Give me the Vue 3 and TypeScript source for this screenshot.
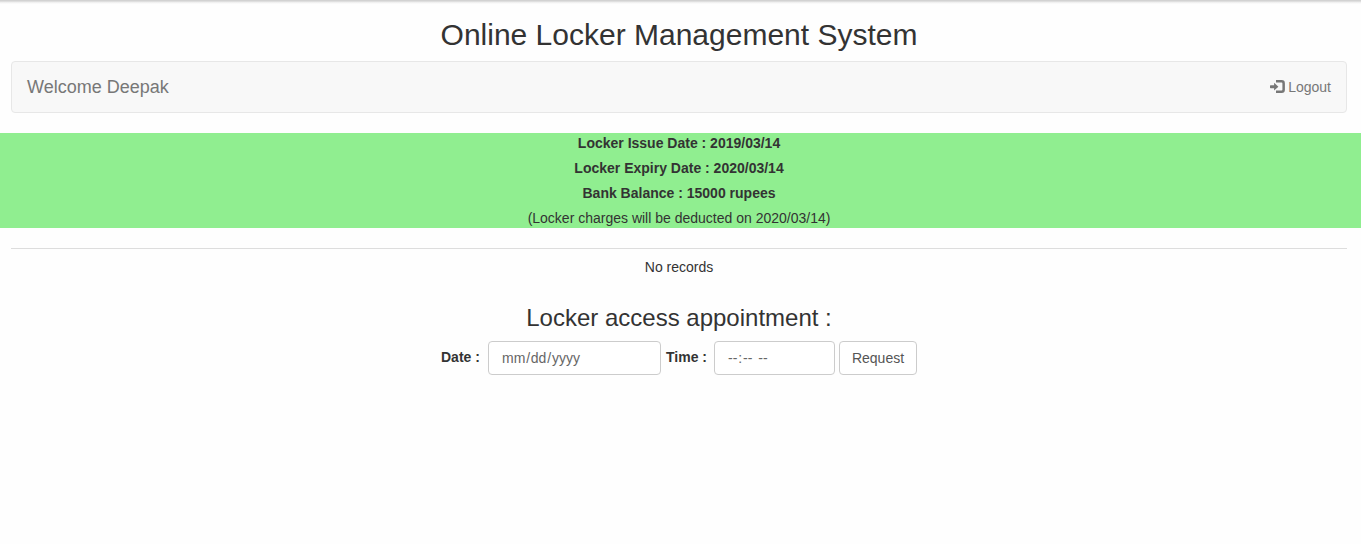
<script setup lang="ts">
import { ref } from 'vue'

const user = ref('Deepak')
const issueDate = ref('2019/03/14')
const expiryDate = ref('2020/03/14')
const balance = ref(15000)
</script>

<template>
  <div class="page">
    <h1 class="title"><span>Online Locker Management System</span></h1>
    <nav class="navbar">
      <span class="brand">Welcome {{ user }}</span>
      <a class="logout">
        <svg class="icon" viewBox="0 0 15 14" width="15" height="14">
          <path fill="currentColor" d="M4.1 2.8 8.4 6.7 4.1 10.6V8.2H0.6Q0 8.2 0 7.6V5.8Q0 5.2 0.6 5.2H4.1Z" />
          <path fill="none" stroke="currentColor" stroke-width="2.5" d="M6 1.35H11.6Q13.65 1.35 13.65 3.4V9.8Q13.65 11.85 11.6 11.85H6" />
        </svg>
        <span class="logout-text">Logout</span>
      </a>
    </nav>
    <section class="summary">
      <p><b>Locker Issue Date : {{ issueDate }}</b></p>
      <p><b>Locker Expiry Date : {{ expiryDate }}</b></p>
      <p><b>Bank Balance : {{ balance }} rupees</b></p>
      <p>(Locker charges will be deducted on {{ expiryDate }})</p>
    </section>
    <div class="records">No records</div>
    <h3 class="subtitle">Locker access appointment :</h3>
    <form class="appointment" @submit.prevent>
      <label class="date-label">Date :</label>
      <div class="control date"><span>mm</span><span class="slash">/</span><span>dd</span><span class="slash">/</span><span>yyyy</span></div>
      <label class="time-label">Time :</label>
      <div class="control time"><span>--</span><span>:</span><span>--</span><span class="meridiem">--</span></div>
      <button class="request" type="submit">Request</button>
    </form>
  </div>
</template>

<style>
body {
  background: #fefefe;
  overflow: hidden;
}
</style>

<style scoped>
.page {
  box-sizing: border-box;
  height: 544px;
  padding-top: 18px;
  background: linear-gradient(#d2d2d2 0, #d2d2d2 1px, #ececec 2px, #fefefe 4px);
  color: #333;
  font: 14px/20px "Liberation Sans", Arial, sans-serif;
}
.title {
  width: 1336px;
  margin: 0 0 10px 11px;
  font-size: 30px;
  line-height: 33px;
  font-weight: 400;
  text-align: center;
}
.navbar {
  box-sizing: border-box;
  display: flex;
  align-items: center;
  justify-content: space-between;
  height: 52px;
  margin: 0 14px 20px 11px;
  padding: 0 15px;
  border: 1px solid #e7e7e7;
  border-radius: 4px;
  background: #f8f8f8;
  color: #777;
}
.brand {
  font-size: 18px;
}
.logout {
  display: flex;
  align-items: center;
  gap: 3px;
}
.summary {
  display: flex;
  flex-direction: column;
  gap: 5px;
  padding: 0 14px 0 11px;
  background: #90ee90;
  text-align: center;
}
.summary p {
  margin: 0;
}
.records {
  margin: 20px 14px 0 11px;
  padding-top: 8px;
  border-top: 1px solid #ddd;
  text-align: center;
}
.subtitle {
  margin: 28px 14px 10px 11px;
  font-size: 24px;
  line-height: 26px;
  font-weight: 400;
  text-align: center;
}
.appointment {
  display: flex;
  margin-left: 441px;
}
.appointment label {
  box-sizing: border-box;
  padding-top: 6px;
  font-weight: 700;
}
.date-label {
  width: 47px;
}
.time-label {
  width: 53px;
  padding-left: 5px;
}
.control,
.request {
  box-sizing: border-box;
  height: 34px;
  border: 1px solid #ccc;
  border-radius: 4px;
  background: #fff;
}
.control {
  display: flex;
  padding: 6px 13px;
  color: #666;
}
.date {
  width: 173px;
}
.slash {
  padding: 0 0.8px;
}
.time {
  width: 121px;
}
.time span:nth-child(2) {
  padding: 0 0.9px;
}
.meridiem {
  margin-left: 6px;
}
.request {
  width: 78px;
  margin-left: 4px;
  padding: 0;
  color: #555;
  font: inherit;
}
</style>
